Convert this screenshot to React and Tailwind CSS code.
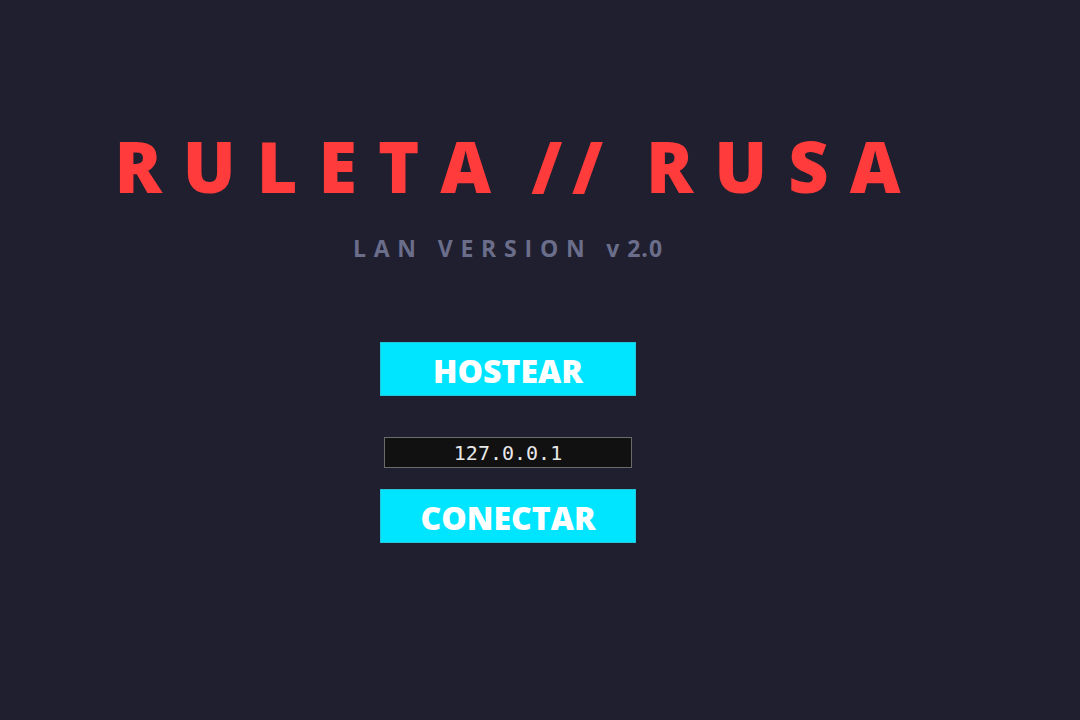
export default function App() {
  return (
    <div
      className="w-[1080px] h-[720px] bg-[#201f2f] flex flex-col items-center pr-[64px]"
      style={{ fontFamily: '"Open Sans", "Liberation Sans", sans-serif' }}
    >
      <h1 className="mt-[118px] flex whitespace-nowrap text-[70px] leading-[96px] font-extrabold text-[#ff3b3b]">
        <span className="tracking-[21px]">RULETA</span>
        <span className="ml-[19px] tracking-[10px]">//</span>
        <span className="ml-[33px] tracking-[21px] mr-[-20px]">RUSA</span>
      </h1>
      <p className="mt-[18px] flex whitespace-nowrap text-[23px] leading-[32px] font-bold text-[#6a6e8a]">
        <span className="tracking-[7.8px]">LAN VERSION v</span>
        <span className="tracking-[1px]">2.0</span>
      </p>
      <div className="mt-[78px] flex flex-col items-center">
        <button className="w-[256px] h-[54px] bg-[#00e5ff] border border-[#22c5da] text-white text-[32px] font-extrabold leading-none pt-[3px]">
          HOSTEAR
        </button>
        <input
          defaultValue="127.0.0.1"
          className="mt-[41px] w-[248px] h-[31px] bg-[#111111] border border-[#6b6b6b] text-center text-[20px] text-[#e8e8e8] outline-none"
          style={{ fontFamily: '"DejaVu Sans Mono", monospace' }}
        />
        <button className="mt-[21px] w-[256px] h-[54px] bg-[#00e5ff] border border-[#22c5da] text-white text-[32px] font-extrabold leading-none pt-[3px]">
          CONECTAR
        </button>
      </div>
    </div>
  );
}
